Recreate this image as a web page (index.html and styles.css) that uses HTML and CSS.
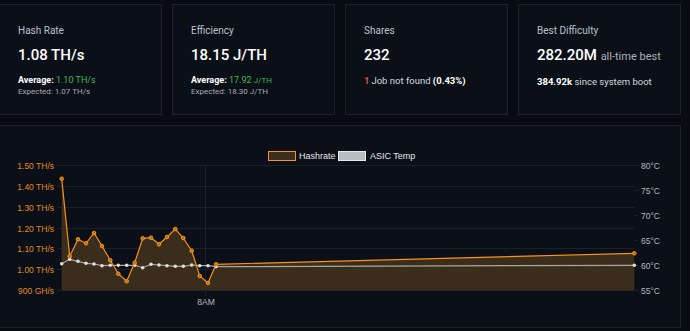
FILE: index.html
```html
<!DOCTYPE html>
<html lang="en">

<head>
  <meta charset="UTF-8">
  <meta name="viewport" content="width=device-width, initial-scale=1.0">
  <title>Dashboard</title>

  <link rel="stylesheet" href="styles.css">
</head>

<body>
  <main class="page">
    <section class="stats">
      <div class="card">
        <h2 class="card-title">Hash Rate</h2>
        <div class="card-value">1.08 TH/s</div>
        <div class="card-line card-line-sm"><b>Average:</b> <span class="good">1.10 TH/s</span></div>
        <div class="card-note">Expected: 1.07 TH/s</div>
      </div>
      <div class="card">
        <h2 class="card-title">Efficiency</h2>
        <div class="card-value">18.15 J/TH</div>
        <div class="card-line card-line-sm"><b>Average:</b> <span class="good">17.92 <small>J/TH</small></span></div>
        <div class="card-note">Expected: 18.30 J/TH</div>
      </div>
      <div class="card">
        <h2 class="card-title">Shares</h2>
        <div class="card-value">232</div>
        <div class="card-line"><span class="bad">1</span>Job not found <b>(0.43%)</b></div>
      </div>
      <div class="card">
        <h2 class="card-title">Best Difficulty</h2>
        <div class="card-value">282.20M <span class="muted">all-time best</span></div>
        <div class="card-line"><b>384.92k</b> since system boot</div>
      </div>
    </section>

    <section class="card chart-card">
      <svg class="chart" width="680" height="201" viewBox="0 0 680 201">
        <!-- legend -->
        <rect x="268.5" y="25.5" width="27" height="9" fill="#3b2e1d" stroke="#f7931a" />
        <text class="legend" x="299" y="33">Hashrate</text>
        <rect x="338.5" y="25.5" width="27" height="9" fill="#b9bcc0" stroke="#e6e6e6" />
        <text class="legend" x="370" y="33">ASIC Temp</text>

        <!-- grid -->
        <g class="grid">
          <line x1="57" y1="39.5" x2="634" y2="39.5" />
          <line x1="57" y1="60.5" x2="634" y2="60.5" />
          <line x1="57" y1="81.5" x2="634" y2="81.5" />
          <line x1="57" y1="102.5" x2="634" y2="102.5" />
          <line x1="57" y1="122.5" x2="634" y2="122.5" />
          <line x1="57" y1="143.5" x2="634" y2="143.5" />
          <line x1="57" y1="164.5" x2="634" y2="164.5" />
          <line x1="205.5" y1="40" x2="205.5" y2="170" />
          <line x1="634" y1="39.5" x2="639" y2="39.5" />
          <line x1="634" y1="64.5" x2="639" y2="64.5" />
          <line x1="634" y1="89.5" x2="639" y2="89.5" />
          <line x1="634" y1="114.5" x2="639" y2="114.5" />
          <line x1="634" y1="139.5" x2="639" y2="139.5" />
          <line x1="634" y1="164.5" x2="639" y2="164.5" />
        </g>

        <!-- hashrate area -->
        <polygon fill="#3a2d1c"
          points="61.7,52.7 69.7,130.3 78,113.3 86,117.3 94,107 102,120 110.3,134.3 118.3,147.7 126.7,155.3 134.7,136.7 142.7,112.3 151,111.7 159,118.3 167,111 175.3,103 183.3,112 191.7,124.7 199.7,150 208,157 216,138.3 634.3,127.3 634.3,164.5 61.7,164.5" />

        <!-- temp line -->
        <polyline fill="none" stroke="#a9a49c" stroke-width="1.2"
          points="61.7,137.7 69.7,133.3 78,135.3 86,137.3 94,138 102,139.7 110.3,139.3 118.3,139.3 126.7,139.3 134.7,139.3 142.7,141.7 151,138.3 159,139 167,139.7 175.3,140.3 183.3,140.3 191.7,139 199.7,139.7 208,139.7 216,140.7 634.3,139.3" />
        <g fill="#dedede">
          <circle cx="61.7" cy="137.7" r="1.8" /><circle cx="69.7" cy="133.3" r="1.8" />
          <circle cx="78" cy="135.3" r="1.8" /><circle cx="86" cy="137.3" r="1.8" />
          <circle cx="94" cy="138" r="1.8" /><circle cx="102" cy="139.7" r="1.8" />
          <circle cx="110.3" cy="139.3" r="1.8" /><circle cx="118.3" cy="139.3" r="1.8" />
          <circle cx="126.7" cy="139.3" r="1.8" /><circle cx="134.7" cy="139.3" r="1.8" />
          <circle cx="142.7" cy="141.7" r="1.8" /><circle cx="151" cy="138.3" r="1.8" />
          <circle cx="159" cy="139" r="1.8" /><circle cx="167" cy="139.7" r="1.8" />
          <circle cx="175.3" cy="140.3" r="1.8" /><circle cx="183.3" cy="140.3" r="1.8" />
          <circle cx="191.7" cy="139" r="1.8" /><circle cx="199.7" cy="139.7" r="1.8" />
          <circle cx="208" cy="139.7" r="1.8" /><circle cx="216" cy="140.7" r="1.8" />
          <circle cx="634.3" cy="139.3" r="1.8" />
        </g>

        <!-- hashrate line -->
        <polyline fill="none" stroke="#f7931a" stroke-width="1.2"
          points="61.7,52.7 69.7,130.3 78,113.3 86,117.3 94,107 102,120 110.3,134.3 118.3,147.7 126.7,155.3 134.7,136.7 142.7,112.3 151,111.7 159,118.3 167,111 175.3,103 183.3,112 191.7,124.7 199.7,150 208,157 216,138.3 634.3,127.3" />
        <g fill="#b8701c" stroke="#f7931a" stroke-width="1">
          <circle cx="61.7" cy="52.7" r="1.8" /><circle cx="69.7" cy="130.3" r="1.8" />
          <circle cx="78" cy="113.3" r="1.8" /><circle cx="86" cy="117.3" r="1.8" />
          <circle cx="94" cy="107" r="1.8" /><circle cx="102" cy="120" r="1.8" />
          <circle cx="110.3" cy="134.3" r="1.8" /><circle cx="118.3" cy="147.7" r="1.8" />
          <circle cx="126.7" cy="155.3" r="1.8" /><circle cx="134.7" cy="136.7" r="1.8" />
          <circle cx="142.7" cy="112.3" r="1.8" /><circle cx="151" cy="111.7" r="1.8" />
          <circle cx="159" cy="118.3" r="1.8" /><circle cx="167" cy="111" r="1.8" />
          <circle cx="175.3" cy="103" r="1.8" /><circle cx="183.3" cy="112" r="1.8" />
          <circle cx="191.7" cy="124.7" r="1.8" /><circle cx="199.7" cy="150" r="1.8" />
          <circle cx="208" cy="157" r="1.8" /><circle cx="216" cy="138.3" r="1.8" />
          <circle cx="634.3" cy="127.3" r="1.8" />
        </g>

        <!-- axes -->
        <g class="axis-left">
          <text x="54" y="42.5">1.50 TH/s</text>
          <text x="54" y="63.5">1.40 TH/s</text>
          <text x="54" y="84.5">1.30 TH/s</text>
          <text x="54" y="105.5">1.20 TH/s</text>
          <text x="54" y="125.5">1.10 TH/s</text>
          <text x="54" y="146.5">1.00 TH/s</text>
          <text x="54" y="167.5">900 GH/s</text>
        </g>
        <g class="axis-right">
          <text x="641" y="42.5">80°C</text>
          <text x="641" y="67.5">75°C</text>
          <text x="641" y="92.5">70°C</text>
          <text x="641" y="117.5">65°C</text>
          <text x="641" y="142.5">60°C</text>
          <text x="641" y="167.5">55°C</text>
        </g>
        <text class="axis-bottom" x="206" y="179">8AM</text>
      </svg>
    </section>
  </main>
</body>

</html>
```

FILE: styles.css
```css
body {
  background: #080c12;
  color: #ffffff;
  font-family: Roboto, "Liberation Sans", sans-serif;
  margin: 0;
  overflow: hidden;
}

.page {
  margin-left: -1px;
  padding-top: 4px;
  width: 682px;
}

.stats {
  display: grid;
  gap: 10px;
  grid-template-columns: repeat(4, 1fr);
}

.card {
  background: #0b1018;
  border: 1px solid #1b222d;
  box-sizing: border-box;
}

.stats .card {
  height: 111px;
  padding: 19px 10px 0 18px;
}

.card-title {
  color: #bcc1c9;
  font-size: 10px;
  font-weight: 400;
  line-height: 13px;
  margin: 0;
}

.card-value {
  font-size: 15px;
  font-weight: 500;
  line-height: 19px;
  margin-top: 9px;
}

.card-value .muted {
  color: #aab0b9;
  font-size: 11px;
  font-weight: 400;
}

.card-line {
  color: #d5d9df;
  font-size: 9.5px;
  line-height: 13px;
  margin-top: 9px;
}

.card-line-sm {
  font-size: 9px;
}

.card-line b {
  color: #ffffff;
  font-weight: 700;
}

.card-line small {
  font-size: 8px;
}

.card-note {
  color: #a5abb4;
  font-size: 8px;
  line-height: 10px;
}

.good {
  color: #3fb950;
}

.bad {
  color: #e5484d;
  font-weight: 700;
  margin-right: 2px;
}

.chart-card {
  height: 203px;
  margin-top: 10px;
}

.chart {
  display: block;
}

.grid line {
  stroke: #1a212c;
  stroke-width: 1;
}

.legend {
  fill: #e4e6ea;
  font-family: "Liberation Sans", Arial, sans-serif;
  font-size: 9px;
}

.axis-left text {
  fill: #e08a1e;
  font-family: "Liberation Sans", Arial, sans-serif;
  font-size: 8.5px;
  text-anchor: end;
}

.axis-right text,
.axis-bottom {
  fill: #b3b7bd;
  font-family: "Liberation Sans", Arial, sans-serif;
  font-size: 8.5px;
}

.axis-bottom {
  text-anchor: middle;
}
```
